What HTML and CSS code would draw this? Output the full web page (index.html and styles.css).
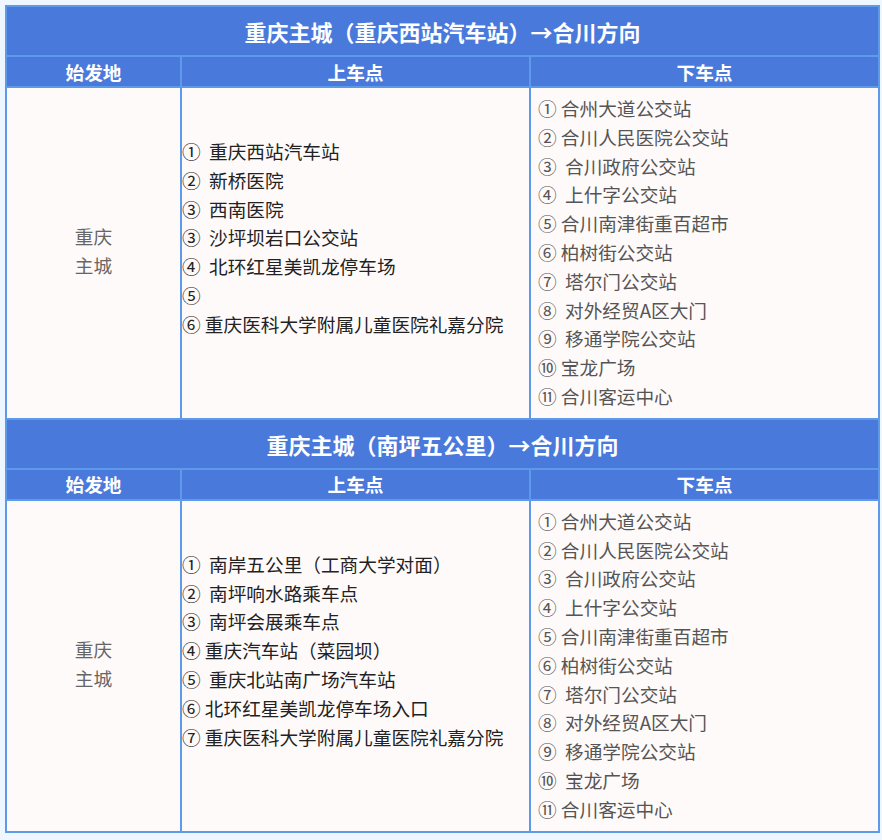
FILE: index.html
```html
<!DOCTYPE html>
<html lang="zh-CN">
<head>
<meta charset="utf-8">
<title>重庆主城→合川方向</title>
<link rel="stylesheet" href="styles.css">
</head>
<body>
<table class="route">
  <colgroup>
    <col class="c-origin">
    <col class="c-board">
    <col class="c-alight">
  </colgroup>
  <tbody>
    <tr><td class="title" colspan="3">重庆主城（重庆西站汽车站）→合川方向</td></tr>
    <tr class="head"><td>始发地</td><td>上车点</td><td>下车点</td></tr>
    <tr class="body">
      <td class="origin">重庆<br>主城</td>
      <td class="board">
        <div>①&nbsp; 重庆西站汽车站</div>
        <div>②&nbsp; 新桥医院</div>
        <div>③&nbsp; 西南医院</div>
        <div>③&nbsp; 沙坪坝岩口公交站</div>
        <div>④&nbsp; 北环红星美凯龙停车场</div>
        <div>⑤</div>
        <div>⑥ 重庆医科大学附属儿童医院礼嘉分院</div>
      </td>
      <td class="alight">
        <div>① 合州大道公交站</div>
        <div>② 合川人民医院公交站</div>
        <div>③&nbsp; 合川政府公交站</div>
        <div>④&nbsp; 上什字公交站</div>
        <div>⑤ 合川南津街重百超市</div>
        <div>⑥ 柏树街公交站</div>
        <div>⑦&nbsp; 塔尔门公交站</div>
        <div>⑧&nbsp; 对外经贸A区大门</div>
        <div>⑨&nbsp; 移通学院公交站</div>
        <div>⑩ 宝龙广场</div>
        <div>⑪ 合川客运中心</div>
      </td>
    </tr>
    <tr><td class="title" colspan="3">重庆主城（南坪五公里）→合川方向</td></tr>
    <tr class="head"><td>始发地</td><td>上车点</td><td>下车点</td></tr>
    <tr class="body">
      <td class="origin">重庆<br>主城</td>
      <td class="board">
        <div>①&nbsp; 南岸五公里（工商大学对面）</div>
        <div>②&nbsp; 南坪响水路乘车点</div>
        <div>③&nbsp; 南坪会展乘车点</div>
        <div>④ 重庆汽车站（菜园坝）</div>
        <div>⑤&nbsp; 重庆北站南广场汽车站</div>
        <div>⑥ 北环红星美凯龙停车场入口</div>
        <div>⑦ 重庆医科大学附属儿童医院礼嘉分院</div>
      </td>
      <td class="alight">
        <div>① 合州大道公交站</div>
        <div>② 合川人民医院公交站</div>
        <div>③&nbsp; 合川政府公交站</div>
        <div>④&nbsp; 上什字公交站</div>
        <div>⑤ 合川南津街重百超市</div>
        <div>⑥ 柏树街公交站</div>
        <div>⑦&nbsp; 塔尔门公交站</div>
        <div>⑧&nbsp; 对外经贸A区大门</div>
        <div>⑨&nbsp; 移通学院公交站</div>
        <div>⑩&nbsp; 宝龙广场</div>
        <div>⑪ 合川客运中心</div>
      </td>
    </tr>
  </tbody>
</table>
</body>
</html>
```
FILE: styles.css
```css
html, body {
  margin: 0;
  padding: 0;
}
body {
  background: #eef6ff;
  padding: 5px 0 0 5px;
  font-family: "Noto Sans CJK SC", "Noto Sans", sans-serif;
  font-size: 18.67px;
}
.route {
  width: 873px;
  border-collapse: collapse;
  table-layout: fixed;
  border: 2px solid #5d9bea;
}
.c-origin { width: 175px; }
.c-board { width: 349px; }
.c-alight { width: 349px; }

.route td {
  border: 2px solid #5d9bea;
  padding: 0;
}
.title {
  background: #4a79dc;
  color: #fff;
  font-weight: bold;
  font-size: 22px;
  text-align: center;
  height: 48px;
  line-height: 26px;
}
.head td {
  background: #4a79dc;
  color: #fff;
  font-weight: bold;
  text-align: center;
  height: 29px;
  line-height: 26px;
}
.body td {
  background: #fffafa;
  line-height: 28.8px;
  vertical-align: middle;
}
.route .origin {
  text-align: center;
  color: #666;
  padding-bottom: 4px;
}
.route .board {
  color: #222;
  padding-bottom: 30px;
}
.route .alight {
  color: #555;
  padding: 6px 0 7px 7px;
}
```
